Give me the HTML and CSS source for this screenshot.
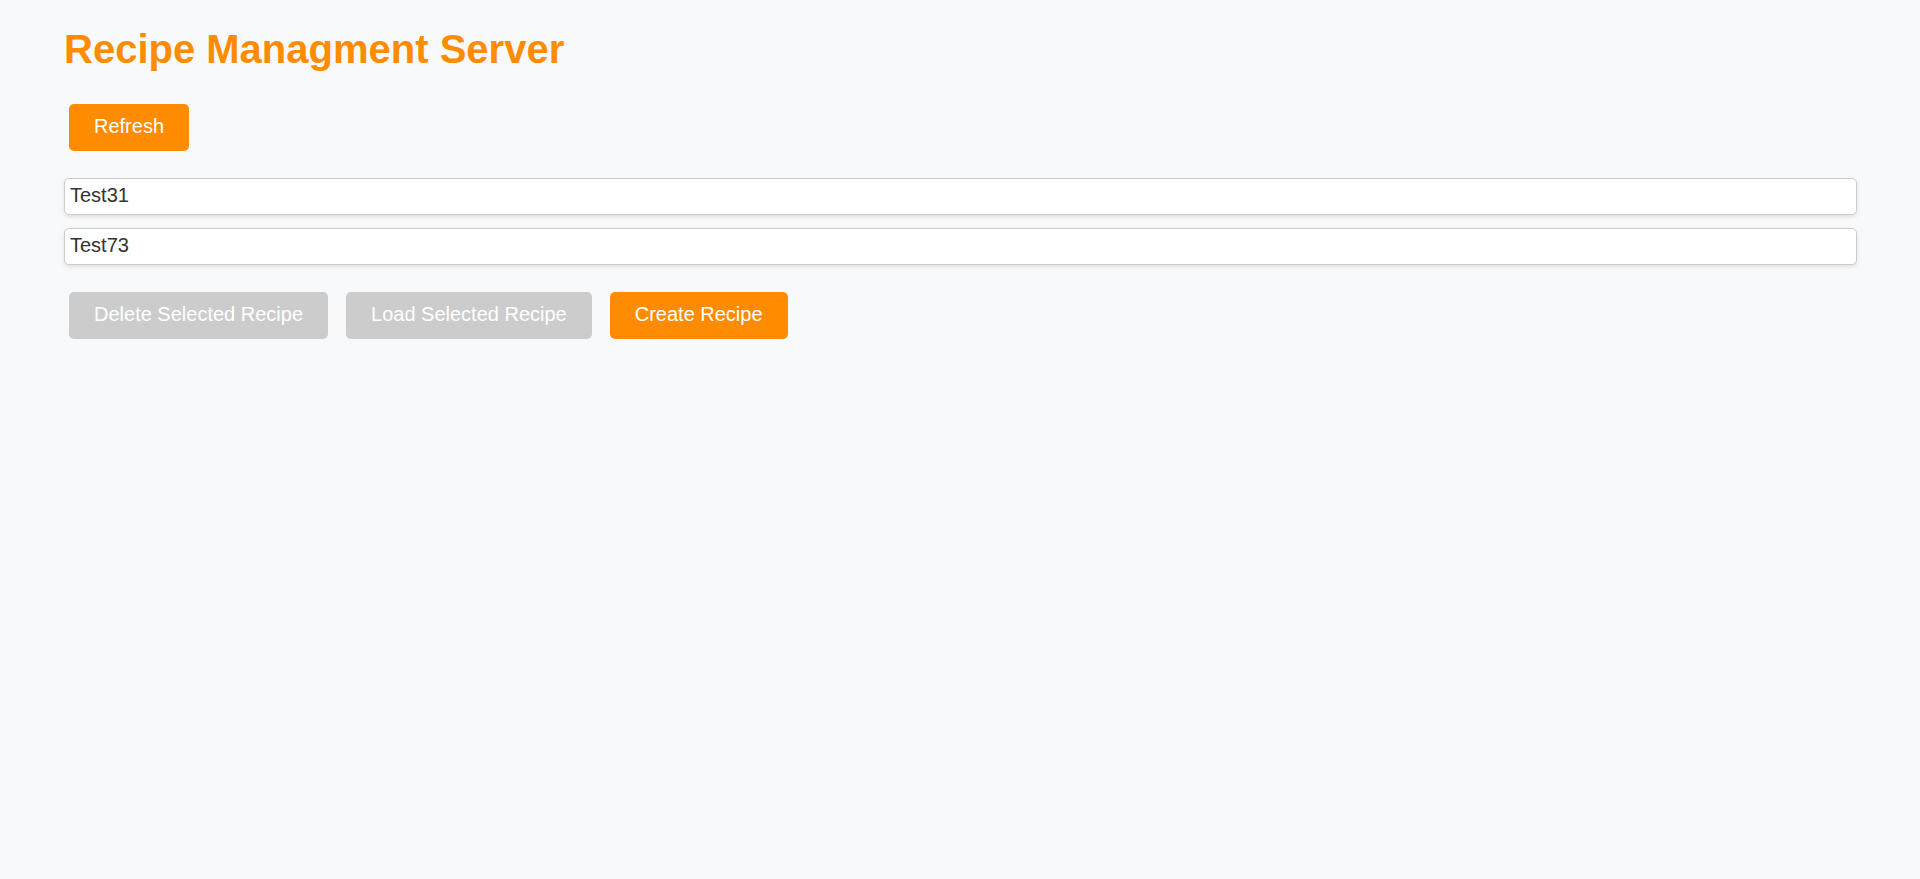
FILE: index.html
```html
<!DOCTYPE html>
<html lang="en">
<head>
<meta charset="utf-8">
<title>Recipe Managment Server</title>
<link rel="stylesheet" href="styles.css">
</head>
<body>
<div class="app">
  <h1 class="title">Recipe Managment Server</h1>
  <div class="toolbar">
    <button class="btn btn-primary">Refresh</button>
  </div>
  <div class="recipe-list">
    <div class="recipe-item">Test31</div>
    <div class="recipe-item">Test73</div>
  </div>
  <div class="actions">
    <button class="btn btn-disabled" disabled>Delete Selected Recipe</button>
    <button class="btn btn-disabled" disabled>Load Selected Recipe</button>
    <button class="btn btn-primary">Create Recipe</button>
  </div>
</div>
</body>
</html>
```

FILE: styles.css
```css
html, body {
  margin: 0;
  padding: 0;
}
body {
  background: #f8f9fa;
  font-family: "Liberation Sans", Arial, sans-serif;
  color: #333333;
}
.app {
  padding: 0 63px 0 64px;
}
.title {
  font-size: 40px;
  font-weight: bold;
  color: #ff8c00;
  margin: 26.8px 0;
  line-height: normal;
}
.toolbar {
  display: flex;
  padding: 5px;
}
.btn {
  font-family: "Liberation Sans", Arial, sans-serif;
  font-size: 20px;
  line-height: 23px;
  padding: 11px 25px 13px;
  border: none;
  border-radius: 5px;
  color: #ffffff;
  cursor: pointer;
}
.btn-primary {
  background: #ff8c00;
}
.btn-disabled {
  background: #cccccc;
  cursor: default;
}
.recipe-list {
  display: flex;
  flex-direction: column;
  gap: 13px;
  margin-top: 22.4px;
}
.recipe-item {
  background: #ffffff;
  border: 1px solid #cccccc;
  border-radius: 5px;
  box-shadow: 0 2px 4px rgba(0, 0, 0, 0.1);
  font-size: 20px;
  line-height: 23px;
  padding: 5px 5px 7px 5px;
  color: #333333;
}
.actions {
  display: flex;
  gap: 18px;
  padding: 0 5px;
  margin-top: 27px;
}
```
